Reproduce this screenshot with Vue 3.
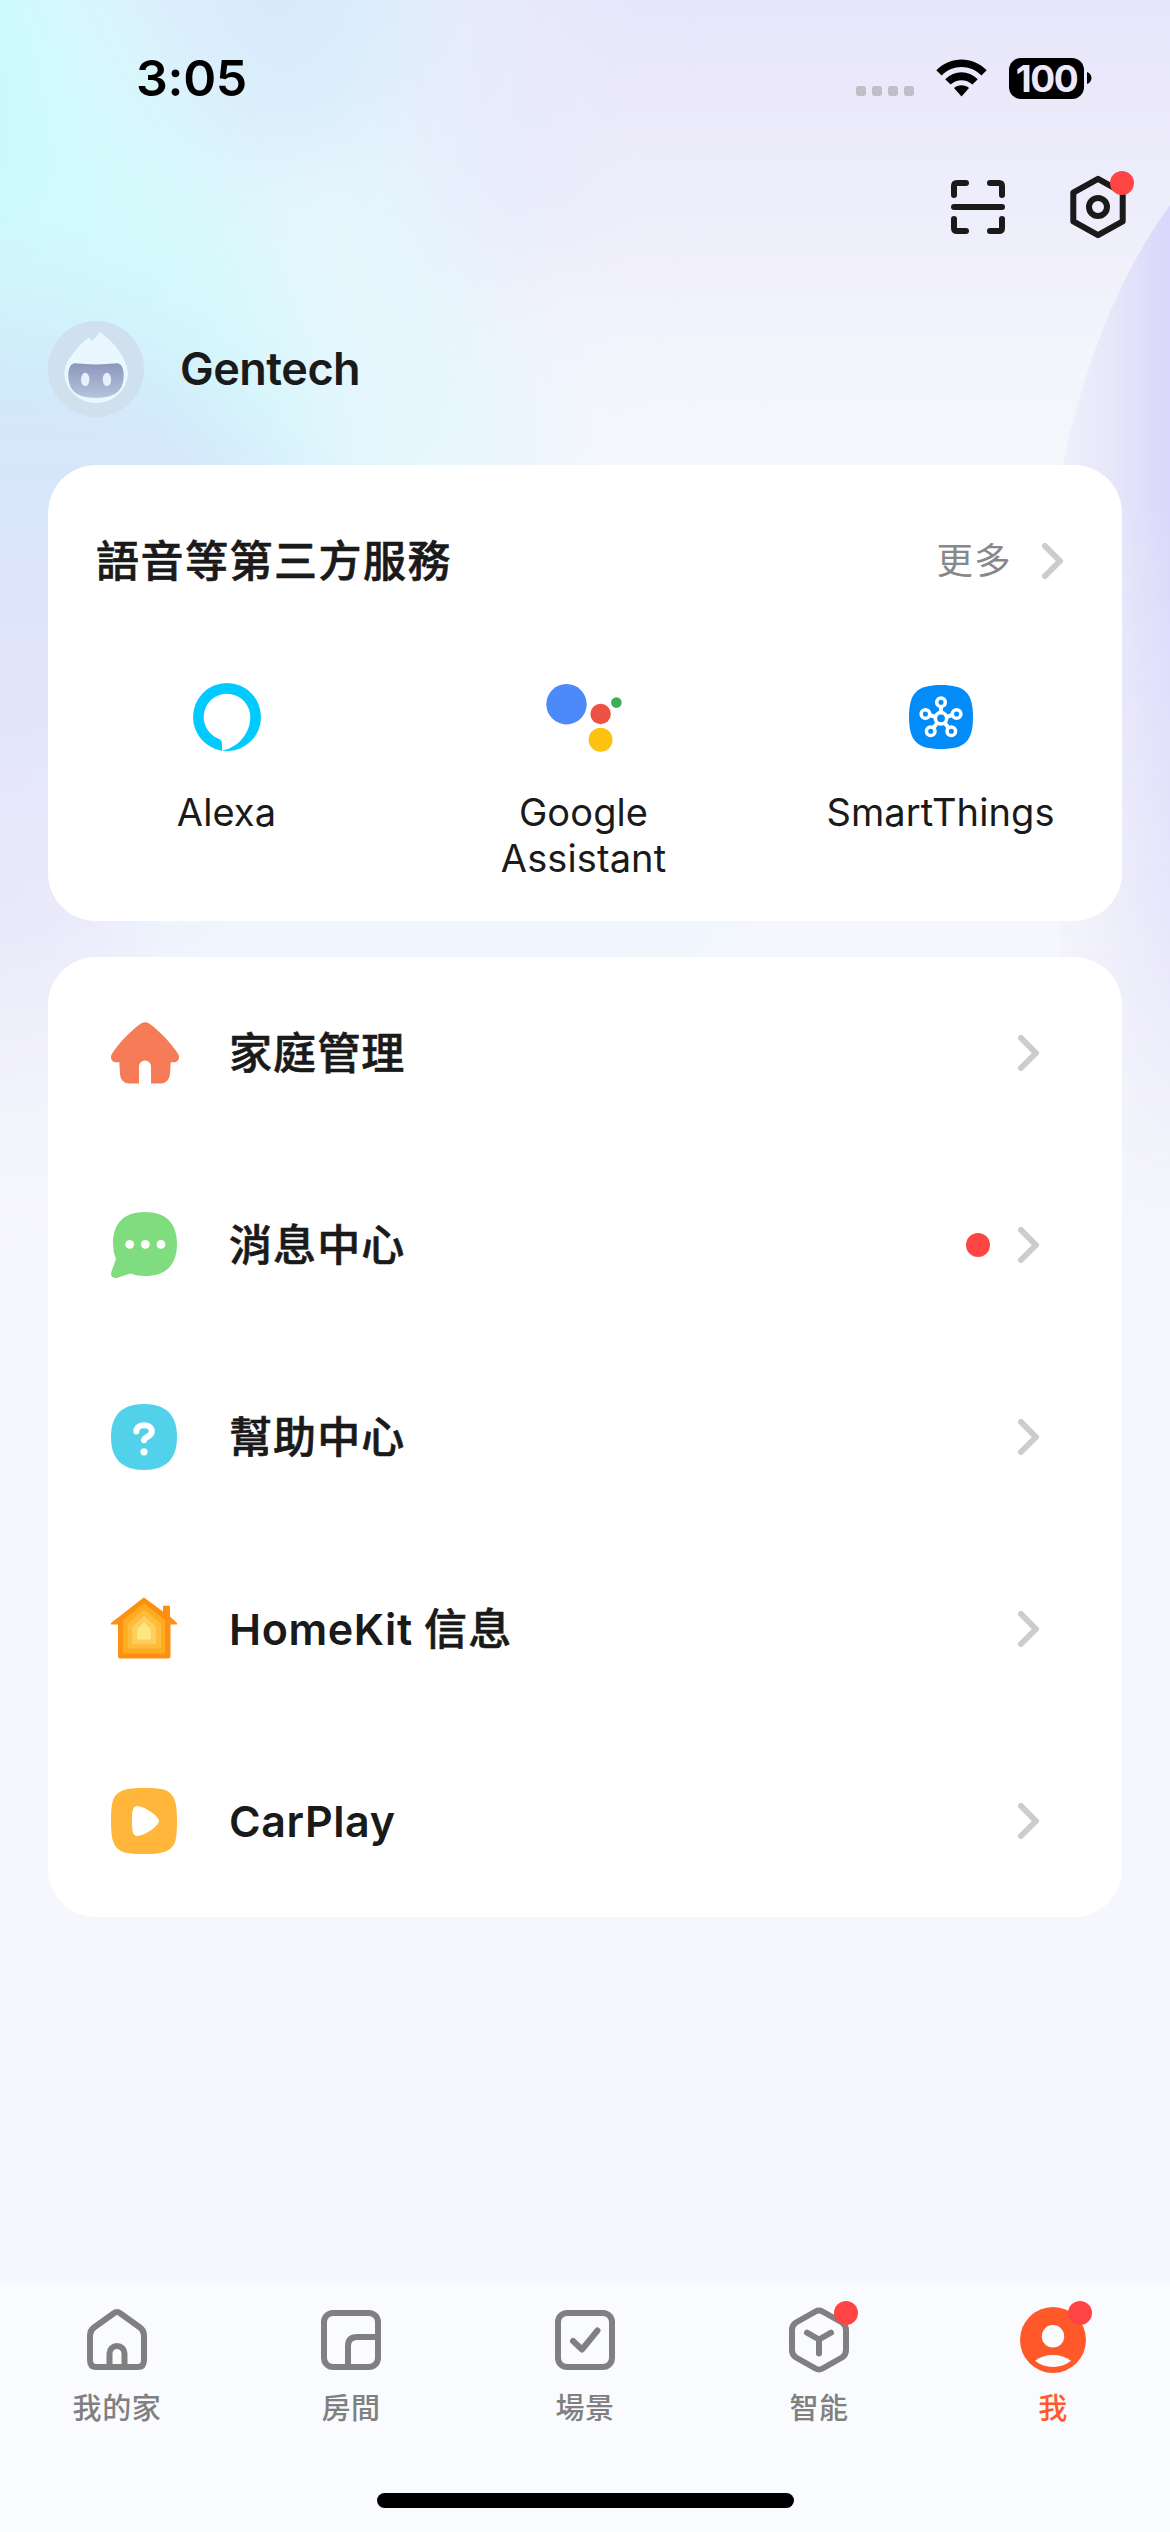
<script setup>
const services = [
  { id: 'alexa', lines: ['Alexa'] },
  { id: 'google', lines: ['Google', 'Assistant'] },
  { id: 'smartthings', lines: ['SmartThings'] },
]

const rows = [
  { id: 'home', label: '家庭管理' },
  { id: 'message', label: '消息中心', dot: true },
  { id: 'help', label: '幫助中心' },
  { id: 'homekit', latin: 'HomeKit ', label: '信息' },
  { id: 'carplay', latin: 'CarPlay' },
]

const tabs = [
  { id: 'home', label: '我的家' },
  { id: 'room', label: '房間' },
  { id: 'scene', label: '場景' },
  { id: 'smart', label: '智能', dot: true },
  { id: 'me', label: '我', dot: true, active: true },
]

const nodes = [
  [32, 17.3],
  [16.4, 29],
  [47.6, 29],
  [21.7, 46.3],
  [42.3, 46.3],
]
</script>

<template>
  <div class="screen">
    <svg class="backdrop" viewBox="0 0 1170 1400" aria-hidden="true">
      <defs>
        <linearGradient id="topTint" x1="0" y1="0" x2="0" y2="1">
          <stop offset="0" stop-color="#e7e5fa" />
          <stop offset="0.5" stop-color="#edecfb" stop-opacity="0.8" />
          <stop offset="1" stop-color="#f1f1fd" stop-opacity="0" />
        </linearGradient>
        <linearGradient id="leftTint" x1="0" y1="0" x2="0" y2="1">
          <stop offset="0" stop-color="#c9eefb" />
          <stop offset="0.12" stop-color="#d2e7fa" />
          <stop offset="0.36" stop-color="#dfe4fa" />
          <stop offset="0.7" stop-color="#eae8fa" />
          <stop offset="1" stop-color="#f3f4fd" stop-opacity="0.3" />
        </linearGradient>
        <linearGradient id="rightTint" x1="0" y1="0" x2="1" y2="0">
          <stop offset="0" stop-color="#f0f0fc" />
          <stop offset="0.4" stop-color="#e9e8fa" />
          <stop offset="0.75" stop-color="#e0defa" />
          <stop offset="1" stop-color="#dad7fb" />
        </linearGradient>
        <linearGradient id="fadeDown" x1="0" y1="0" x2="0" y2="1">
          <stop offset="0" stop-color="#fff" />
          <stop offset="0.3" stop-color="#fff" />
          <stop offset="0.7" stop-color="#fff" stop-opacity="0.5" />
          <stop offset="1" stop-color="#fff" stop-opacity="0" />
        </linearGradient>
        <mask id="rightMask">
          <rect x="1000" y="190" width="200" height="1040" fill="url(#fadeDown)" />
        </mask>
        <filter id="soft" x="-60%" y="-60%" width="220%" height="220%">
          <feGaussianBlur stdDeviation="55" />
        </filter>
      </defs>
      <rect width="1170" height="1400" fill="#f6f7fc" />
      <rect width="1170" height="460" fill="url(#topTint)" />
      <g filter="url(#soft)">
        <path d="M-150 300L420 200L620 560L760 960L700 1000L-150 1000Z" fill="#eff6fe" />
        <path d="M300 -150H560L560 250L420 260Z" fill="#e7ebfb" />
        <path d="M-150 -150H430L420 150L560 460L100 560L-150 300Z" fill="#e6f6fd" />
        <path d="M60 -150H440L370 130L220 160Z" fill="#d8ebfb" />
        <path d="M-150 -150H20L130 60L240 220L310 420L380 560H260L60 330L-150 230Z" fill="#d3fafc" />
        <path d="M-200 -100H10L30 120L50 240L-200 200Z" fill="#c8fafd" />
        <path d="M-200 290L20 300L180 360L330 540L140 760L110 1200H-200Z" fill="url(#leftTint)" />
      </g>
      <path
        d="M1170 205C1118 275 1078 380 1060 480V1230H1170Z"
        fill="url(#rightTint)"
        mask="url(#rightMask)"
      />
    </svg>

    <header class="status">
      <span class="time">3:05</span>
      <div class="indicators">
        <div class="signal"><i></i><i></i><i></i><i></i></div>
        <svg class="wifi" viewBox="0 0 51 38" width="51" height="38">
          <path d="M0.3 11.2C14.5-3.1 36.5-3.1 50.7 11.2L45.4 16.5C34.2 5.2 16.8 5.2 5.6 16.5Z" />
          <path d="M9.2 20.2C18.6 11 32.4 11 41.8 20.2L36.4 25.6C30.2 19.7 20.8 19.7 14.6 25.6Z" />
          <path d="M18 29C22.2 25.2 28.8 25.2 33 29L25.5 37.5Z" />
        </svg>
        <div class="battery">100</div>
        <svg class="nub" viewBox="0 0 5 12" width="5" height="12"><path d="M0 0C6 2 6 10 0 12Z" /></svg>
      </div>
    </header>

    <div class="actions">
      <svg viewBox="0 0 72 72" width="72" height="72" class="line-icon">
        <path d="M12 24V15Q12 12 15 12H24M48 12H57Q60 12 60 15V24M60 48V57Q60 60 57 60H48M24 60H15Q12 60 12 57V48M12 36H60" />
      </svg>
      <div class="badge-host">
        <svg viewBox="0 0 72 72" width="72" height="72" class="line-icon">
          <path d="M36 7.8L60.7 21.6V50.4L36 64.2L11.3 50.4V21.6Z" />
          <circle cx="36" cy="36" r="9" />
        </svg>
        <i class="dot gear-dot"></i>
      </div>
    </div>

    <div class="profile">
      <svg viewBox="0 0 96 96" width="96" height="96">
        <defs>
          <linearGradient id="visor" x1="0" y1="0" x2="0" y2="1">
            <stop offset="0" stop-color="#8c97bd" />
            <stop offset="1" stop-color="#b6c3d9" />
          </linearGradient>
        </defs>
        <circle cx="48" cy="48" r="48" fill="#cfe0ee" />
        <path
          d="M51 12Q52 10.500 53.400 12C63 20 70 26.500 74.500 35.500C78 42 80 48 80 54A32 31 0 0 1 16.300 54C16.300 46 19 40 24 34C29 27 35 20.500 39.600 17.500Q41.300 16.200 42.300 17.800L44 20.300Z"
          fill="#ebf7ff"
        />
        <path
          d="M27 42.300Q48 44.500 69 42.300C73.500 42.300 75.700 48 75.700 54C75.700 70 67 76.800 48 76.800S20.300 70 20.300 54C20.300 48 22.500 42.300 27 42.300Z"
          fill="url(#visor)"
        />
        <ellipse cx="37.200" cy="58.400" rx="4.200" ry="6.700" fill="#e7f1fd" />
        <ellipse cx="58.900" cy="58.400" rx="4.200" ry="6.700" fill="#e7f1fd" />
      </svg>
      <span class="name">Gentech</span>
    </div>

    <main class="content">
      <section class="card">
        <div class="card-head">
          <h2>語音等第三方服務</h2>
          <span class="more">更多</span>
          <svg class="chevron" viewBox="0 0 21 36" width="21" height="36"><path d="M3 3L18 18L3 33" /></svg>
        </div>
        <div class="services">
          <div v-for="s in services" :key="s.id" class="service">
            <svg v-if="s.id === 'alexa'" viewBox="0 0 72 72" width="72" height="72">
              <circle cx="36" cy="36" r="34" fill="#00caff" />
              <path
                fill="#fff"
                d="M31 71V62.800Q31 58.900 27 57.500A23.300 23.300 0 1 1 59.300 36C59.300 52.500 47 66.500 31.500 69.500Z"
              />
            </svg>
            <svg v-else-if="s.id === 'google'" viewBox="0 0 80 72" width="80" height="72">
              <circle cx="22.500" cy="23.200" r="20.200" fill="#4b8af8" />
              <circle cx="56.600" cy="33" r="10.200" fill="#ec5144" />
              <circle cx="56.600" cy="58.700" r="12" fill="#fdc20f" />
              <circle cx="72.400" cy="21.600" r="5.300" fill="#3cae58" />
            </svg>
            <svg v-else viewBox="-4 -4 72 72" width="72" height="72">
              <path
                fill="#028cfa"
                d="M32 0C56 0 64 8 64 32S56 64 32 64S0 56 0 32S8 0 32 0Z"
              />
              <g fill="none" stroke="#fff">
                <path
                  v-for="(n, i) in nodes"
                  :key="i"
                  stroke-width="4"
                  :d="`M32 33.300L${n[0]} ${n[1]}`"
                />
                <circle cx="32" cy="33.300" r="5.700" stroke-width="3.600" fill="#028cfa" />
                <circle
                  v-for="(n, i) in nodes"
                  :key="'c' + i"
                  :cx="n[0]"
                  :cy="n[1]"
                  r="4.300"
                  stroke-width="3.500"
                  fill="#028cfa"
                />
              </g>
            </svg>
            <div class="service-label">
              <div v-for="l in s.lines" :key="l">{{ l }}</div>
            </div>
          </div>
        </div>
      </section>

      <section class="card">
        <div v-for="r in rows" :key="r.id" class="row">
          <svg v-if="r.id === 'home'" viewBox="0 -3.500 68 68" width="68" height="68">
            <path
              fill="#f57c56"
              d="M28.500 2Q34 -2.500 39.500 2C50 10 60 20.500 66.500 30.500C70 35 67 39.700 63.500 39.700H59.700L59 52Q57.500 61 49.500 61H40V44A6 6 0 0 0 28 44V61H18.500Q10 61 9 52L8.300 39.700H4.500C1 39.700 -2 35 1.500 30.500C8 20.500 18 10 28.500 2Z"
            />
          </svg>
          <svg v-else-if="r.id === 'message'" viewBox="0 -1 68 68" width="68" height="68">
            <path
              fill="#7fdc7f"
              d="M34 0C55 0 66 11 66 32S55 64 34 64Q26 64 19.300 61.500L6.500 65.800C2 67 -1 63.500 0.400 59.800L5 47Q2 40 2 32C2 11 13 0 34 0Z"
            />
            <g fill="#fff">
              <circle cx="18.700" cy="32.300" r="4.400" />
              <circle cx="34.300" cy="32.300" r="4.400" />
              <circle cx="50" cy="32.300" r="4.400" />
            </g>
          </svg>
          <svg v-else-if="r.id === 'help'" viewBox="0 -1 68 68" width="68" height="68">
            <path fill="#52d2ea" d="M33 0C55 0 66 11 66 33S55 66 33 66S0 55 0 33S11 0 33 0Z" />
            <path
              d="M25.300 27.500C25.300 19 40.800 19 40.800 27.500C40.800 33 33 32.500 33 36.300"
              fill="none"
              stroke="#fff"
              stroke-width="6"
              stroke-linecap="round"
            />
            <circle cx="33" cy="47.800" r="3.600" fill="#fff" />
          </svg>
          <svg v-else-if="r.id === 'homekit'" viewBox="0 -2.500 68 68" width="68" height="68">
            <path
              fill="#fd9012"
              d="M33 0L52 14V8.200H59V19L66 25.500V27H59.500V59Q59.500 61 57.500 61H9Q7 61 7 59V27H0V25.500L32 0.500Q33 -0.500 34 0.500Z"
            />
            <path fill="#ffab20" d="M33 5.700L54 22.500V56H11.700V22.500Z" />
            <path fill="#ffbb3c" d="M33 12L50 26V51H16.700V26Z" />
            <path fill="#fdcf5c" d="M33 18.300L45 29V46.300H21.300V29Z" />
            <path fill="#fee680" d="M33 24.400L40 32V42H26V32Z" />
          </svg>
          <svg v-else viewBox="0 -1 68 68" width="68" height="68">
            <path
              fill="#ffb63b"
              d="M33 0C50 0 56 1.500 60 6S66 16 66 33S64.500 56 60 60S50 66 33 66S10 64.500 6 60S0 50 0 33S1.500 10 6 6S16 0 33 0Z"
            />
            <path
              fill="#fff"
              d="M26.500 18C32 18.500 43 24.500 47 30.500Q49 33 47 35.500C43 41.500 32 47.500 26.500 48C22 48 21 44.500 21 33S22 18 26.500 18Z"
            />
          </svg>
          <span class="row-label"><span v-if="r.latin" class="latin">{{ r.latin }}</span>{{ r.label }}</span>
          <i v-if="r.dot" class="dot"></i>
          <svg class="chevron" viewBox="0 0 21 36" width="21" height="36"><path d="M3 3L18 18L3 33" /></svg>
        </div>
      </section>
    </main>

    <nav class="tabbar">
      <div class="tabs">
        <div v-for="t in tabs" :key="t.id" class="tab" :class="{ active: t.active }">
          <div class="badge-host">
            <svg viewBox="0 0 66 66" width="66" height="66" class="tab-icon">
              <template v-if="t.id === 'home'">
                <path d="M29.500 6.500Q33 3.500 36.500 6.500L56 20.500Q60 23.500 60 28.500V53Q60 60 54 60H12Q6 60 6 53V28.500Q6 23.500 10 20.500Z" />
                <path d="M25.500 60V46.500A7.500 7.500 0 0 1 40.500 46.500V60" />
              </template>
              <template v-else-if="t.id === 'room'">
                <rect x="6" y="6" width="54" height="54" rx="9" />
                <path d="M60 30H39Q30 30 30 39V60" />
              </template>
              <template v-else-if="t.id === 'scene'">
                <rect x="6" y="6" width="54" height="54" rx="9" />
                <path d="M21 34L30 42.500L45.500 23.500" />
              </template>
              <template v-else-if="t.id === 'smart'">
                <path d="M29.500 4.500Q33 2.500 36.500 4.500L56 15.500Q60 18 60 23V43Q60 48 56 50.500L36.500 61.500Q33 63.500 29.500 61.500L10 50.500Q6 48 6 43V23Q6 18 10 15.500Z" />
                <path d="M21 25.700L33 32.500L45 25.700M33 32.500V46.500" />
              </template>
              <template v-else>
                <circle cx="33" cy="33" r="33" class="solid" />
                <circle cx="33" cy="29.300" r="11.200" class="cut" />
                <path d="M15 53.700C25 46 41 46 51 53.700C41 62 25 62 15 53.700Z" class="cut" />
              </template>
            </svg>
            <i v-if="t.dot" class="dot tab-dot"></i>
          </div>
          <span class="tab-label">{{ t.label }}</span>
        </div>
      </div>
      <div class="home-indicator"></div>
    </nav>
  </div>
</template>

<style>
body {
  margin: 0;
  background: #f6f7fc;
}
</style>

<style scoped>
.screen {
  position: relative;
  display: flex;
  flex-direction: column;
  width: 1170px;
  height: 2532px;
  overflow: hidden;
  background: #f6f7fc;
  color: #1a1a1a;
  font-family: Inter, 'Noto Sans CJK TC', sans-serif;
}
.screen svg {
  display: block;
  flex: none;
}
.backdrop {
  position: absolute;
  top: 0;
  left: 0;
  width: 1170px;
  height: 1400px;
}
.status {
  position: relative;
  display: flex;
  justify-content: space-between;
  align-items: center;
  height: 156px;
  padding: 0 78px 0 136px;
}
.time {
  color: #000;
  font-size: 50px;
  font-weight: 600;
  letter-spacing: -0.3px;
}
.indicators {
  display: flex;
  align-items: center;
}
.signal {
  display: flex;
  gap: 6px;
  margin: 26px 22px 0 0;
}
.signal i {
  width: 10px;
  height: 10px;
  border-radius: 3px;
  background: #bfbdc8;
}
.wifi {
  margin-right: 22px;
}
.battery {
  width: 75px;
  height: 41px;
  margin-right: 3px;
  border-radius: 12px;
  background: #000;
  color: #ebe9fb;
  font-size: 37px;
  font-weight: 700;
  line-height: 41px;
  text-align: center;
  letter-spacing: -1.4px;
}
.actions {
  position: relative;
  display: flex;
  justify-content: flex-end;
  gap: 48px;
  height: 72px;
  margin-top: 15px;
  padding-right: 36px;
}
.line-icon {
  fill: none;
  stroke: #1a1a1a;
  stroke-width: 6;
  stroke-linecap: round;
  stroke-linejoin: round;
}
.badge-host {
  position: relative;
}
.dot {
  display: block;
  flex: none;
  width: 24px;
  height: 24px;
  border-radius: 50%;
  background: #ff4444;
}
.gear-dot {
  position: absolute;
  top: 0;
  right: 0;
}
.profile {
  position: relative;
  display: flex;
  align-items: center;
  gap: 36px;
  height: 96px;
  margin-top: 78px;
  padding-left: 48px;
}
.name {
  font-size: 45px;
  font-weight: 600;
  line-height: 60px;
  letter-spacing: -0.5px;
}
.content {
  position: relative;
  display: flex;
  flex-direction: column;
  flex: 1;
  gap: 36px;
  padding: 48px 48px 0;
}
.card {
  border-radius: 48px;
  background: #fff;
}
.card-head {
  display: flex;
  align-items: center;
  height: 192px;
  padding: 0 59px 0 48px;
}
h2 {
  flex: 1;
  margin: 0;
  font-size: 43px;
  font-weight: 500;
  line-height: 62px;
  letter-spacing: 1.5px;
  -webkit-text-stroke: 0.6px currentColor;
}
.more {
  margin-right: 30px;
  color: #888;
  font-size: 36.5px;
  line-height: 62px;
  letter-spacing: 1.3px;
}
.chevron {
  fill: none;
  stroke: #ccc;
  stroke-width: 6;
  stroke-linecap: round;
  stroke-linejoin: round;
}
.services {
  display: grid;
  grid-template-columns: repeat(3, 357px);
  height: 264px;
}
.service {
  display: flex;
  flex-direction: column;
  align-items: center;
  padding-top: 24px;
}
.service-label {
  margin-top: 36px;
  font-size: 38px;
  line-height: 46px;
  letter-spacing: 0.1px;
  text-align: center;
}
.row {
  display: flex;
  align-items: center;
  height: 192px;
  padding: 0 83px 0 63px;
}
.row-label {
  flex: 1;
  margin-left: 50px;
  font-size: 43px;
  font-weight: 500;
  line-height: 60px;
  letter-spacing: 1.1px;
  white-space: pre;
  -webkit-text-stroke: 0.6px currentColor;
}
.latin {
  font-weight: 600;
  letter-spacing: 0.6px;
  -webkit-text-stroke: 0;
}
.row .dot {
  margin-right: 28px;
}
.tabbar {
  position: relative;
  display: flex;
  flex-direction: column;
  align-items: center;
  height: 249px;
  background: #fafbfe;
}
.tabs {
  display: grid;
  grid-template-columns: repeat(5, 234px);
  height: 210px;
}
.tab {
  display: flex;
  flex-direction: column;
  align-items: center;
  padding-top: 24px;
  color: #808080;
}
.tab.active {
  color: #ff592a;
}
.tab-icon {
  fill: none;
  stroke: currentColor;
  stroke-width: 6;
  stroke-linecap: round;
  stroke-linejoin: round;
}
.tab-icon .solid {
  fill: currentColor;
  stroke: none;
}
.tab-icon .cut {
  fill: #fafbfe;
  stroke: none;
}
.tab-dot {
  position: absolute;
  top: -6px;
  right: -6px;
}
.tab-label {
  margin-top: 16px;
  font-size: 29px;
  font-weight: 500;
  line-height: 40px;
  letter-spacing: 0.6px;
}
.home-indicator {
  width: 417px;
  height: 15px;
  border-radius: 8px;
  background: #000;
}
</style>
